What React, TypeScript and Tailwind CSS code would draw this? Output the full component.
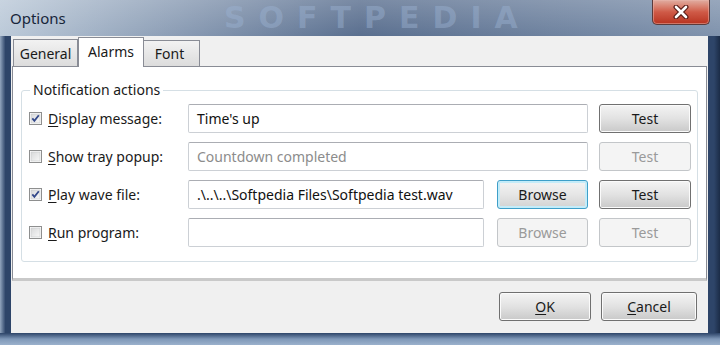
const font = "font-['Noto_Sans','Open_Sans',sans-serif]";

const CheckBox = ({ checked }: { checked: boolean }) => (
  <svg width="13" height="13" viewBox="0 0 13 13" className="shrink-0">
    <defs>
      <linearGradient id="cbg" x1="0" y1="0" x2="1" y2="1">
        <stop offset="0" stopColor="#d8d9da" />
        <stop offset="1" stopColor="#f8f8f8" />
      </linearGradient>
    </defs>
    <rect x="0.5" y="0.5" width="12" height="12" fill="#fff" stroke="#8e8f8f" />
    <rect x="2" y="2" width="9" height="9" fill="url(#cbg)" stroke="#c6c8ca" strokeWidth="0.6" />
    {checked && (
      <path d="M3.3 6.4 L5.4 8.9 L9.8 3.2" fill="none" stroke="#34498a" strokeWidth="1.8" />
    )}
  </svg>
);

const Mn = ({ text, k }: { text: string; k: number }) => (
  <span>
    {text.slice(0, k)}
    <span className="underline underline-offset-2">{text[k]}</span>
    {text.slice(k + 1)}
  </span>
);

type BtnKind = "normal" | "disabled" | "focus";

const Btn = ({ children, kind, w }: { children: React.ReactNode; kind: BtnKind; w: string }) => {
  const base = `h-[29px] ${w} rounded-[3px] flex items-center justify-center text-[14px] shrink-0`;
  if (kind === "disabled")
    return <div className={`${base} border border-[#c3c6c9] bg-[#f4f4f4] text-[#9a9a9a]`}>{children}</div>;
  if (kind === "focus")
    return (
      <div className={`${base} border border-[#3e9fc9] bg-gradient-to-b from-[#f4f4f4] via-[#e6e6e6] to-[#d2d2d2] shadow-[inset_0_0_0_2px_#c4ecf9] text-[#1a1a1a]`}>
        {children}
      </div>
    );
  return (
    <div className={`${base} border border-[#707070] bg-gradient-to-b from-[#f4f4f4] via-[#e2e2e2] to-[#c9c9c9] shadow-[inset_0_0_0_1px_#fbfbfb] text-[#1a1a1a]`}>
      {children}
    </div>
  );
};

const TextBox = ({ value, disabled, w }: { value?: string; disabled?: boolean; w: string }) => (
  <div
    className={`h-[29px] ${w} shrink-0 rounded-[2px] border border-[#ccd0d5] border-t-[#abadb3] bg-white px-[8px] flex items-center text-[14px] ${
      disabled ? "text-[#8c8c8c]" : "text-[#111]"
    }`}
  >
    {value}
  </div>
);

const Row = ({
  checked,
  label,
  k,
  value,
  disabled,
  browse,
  test,
}: {
  checked: boolean;
  label: string;
  k: number;
  value?: string;
  disabled?: boolean;
  browse?: BtnKind;
  test: BtnKind;
}) => (
  <div className="flex items-center h-[29px]">
    <div className="w-[159px] flex items-center gap-[6px] text-[14px] text-[#1a1a1a]">
      <CheckBox checked={checked} />
      <Mn text={label} k={k} />
    </div>
    {browse ? (
      <>
        <TextBox value={value} disabled={disabled} w="w-[296px]" />
        <div className="ml-[13px]">
          <Btn kind={browse} w="w-[91px]">Browse</Btn>
        </div>
      </>
    ) : (
      <TextBox value={value} disabled={disabled} w="w-[400px]" />
    )}
    <div className="ml-[11px]">
      <Btn kind={test} w="w-[92px]">Test</Btn>
    </div>
  </div>
);

export default function App() {
  return (
    <div className={`w-[720px] h-[345px] overflow-hidden bg-[#2e4569] flex flex-col ${font}`}>
      {/* title bar */}
      <div className="relative h-[36px] shrink-0 bg-gradient-to-r from-[#bccad9] via-[#5a6f8f] to-[#8093ad]">
        <div className="absolute inset-0 bg-gradient-to-b from-[#ffffff30] to-transparent" />
        <div className="absolute left-[224px] top-0 leading-[36px] text-[30px] font-bold tracking-[13px] text-[#9cb3d3]/45 font-['DejaVu_Sans',sans-serif]">
          SOFTPEDIA
        </div>
        <div className="relative w-fit ml-[10px] pt-[7px] text-[15px] text-[#17263a]">Options</div>
        <div className="absolute right-[10px] top-0 w-[58px] h-[25px] rounded-b-[5px] border border-t-0 border-[#5b3b3b] bg-gradient-to-b from-[#e0ada1] via-[#cf5a47] to-[#b8321f] shadow-[inset_0_0_0_1px_#e9b8ae80] flex items-center justify-center">
          <svg width="16" height="14" viewBox="0 0 16 14">
            <path d="M3 2 L13 12 M13 2 L3 12" stroke="#5a1f1a" strokeWidth="5" strokeLinecap="round" />
            <path d="M3 2 L13 12 M13 2 L3 12" stroke="#fff" strokeWidth="2.6" strokeLinecap="round" />
          </svg>
        </div>
      </div>

      <div className="flex flex-1">
        <div className="w-[11px] bg-gradient-to-r from-[#93a6be] via-[#2e4569] to-[#2e4569]" />
        {/* client */}
        <div className="w-[697px] h-[297px] bg-[#f0f0f0] flex flex-col">
          {/* tabs */}
          <div className="h-[30px] flex items-end pl-[2px] text-[14px] text-[#1a1a1a]">
            <div className="h-[27px] w-[65px] border border-b-0 border-[#898c95] bg-gradient-to-b from-[#f2f2f2] to-[#dcdcdc] flex items-center justify-center">
              General
            </div>
            <div className="relative z-10 -mb-[1px] h-[30px] w-[66px] border border-b-0 border-[#898c95] bg-white flex items-center justify-center pb-[2px]">
              Alarms
            </div>
            <div className="h-[26px] w-[56px] border border-b-0 border-l-0 border-[#898c95] bg-gradient-to-b from-[#f2f2f2] to-[#dcdcdc] flex items-center justify-center pr-[4px]">
              Font
            </div>
          </div>
          {/* tab panel */}
          <div className="ml-[1px] w-[695px] h-[215px] border border-[#898c95] border-b-[3px] border-b-[#c9c9c9] bg-white pt-[23px] px-[8px]">
            <div className="relative h-[172px] rounded-[3px] border border-[#d5dfe5] pt-[13px] pl-[7px]">
              <div className="absolute left-[8px] top-[-11px] bg-white px-[3px] text-[14px] text-[#1a1a1a] leading-[20px]">
                Notification actions
              </div>
              <div className="flex flex-col gap-[9px]">
                <Row checked label="Display message:" k={0} value="Time's up" test="normal" />
                <Row checked={false} label="Show tray popup:" k={0} value="Countdown completed" disabled test="disabled" />
                <Row checked label="Play wave file:" k={0} value=".\..\..\Softpedia Files\Softpedia test.wav" browse="focus" test="normal" />
                <Row checked={false} label="Run program:" k={0} browse="disabled" test="disabled" />
              </div>
            </div>
          </div>
          {/* bottom buttons */}
          <div className="flex-1 flex items-start justify-end gap-[10px] pr-[11px] pt-[11px]">
            <Btn kind="normal" w="w-[92px]">
              <Mn text="OK" k={0} />
            </Btn>
            <Btn kind="normal" w="w-[96px]">
              <Mn text="Cancel" k={0} />
            </Btn>
          </div>
        </div>
        <div className="w-[12px] bg-gradient-to-r from-[#2e4569] via-[#2e4569] to-[#1b2c47]" />
      </div>
      <div className="h-[12px] shrink-0 bg-gradient-to-b from-[#2e4569] via-[#7f98b8] to-[#9bb1cc]" />
    </div>
  );
}
